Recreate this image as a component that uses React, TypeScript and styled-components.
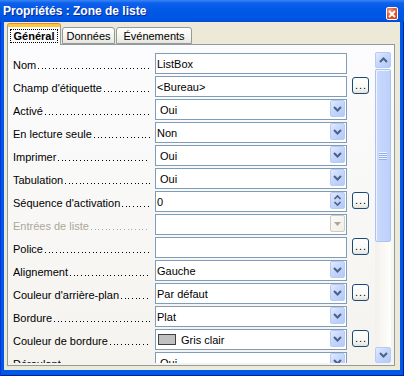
import React from 'react';
import styled, { createGlobalStyle } from 'styled-components';

const Global = createGlobalStyle`
  html, body { margin: 0; padding: 0; background: #ffffff; }
  body { font-family: "Liberation Sans", Arial, sans-serif; }
  * { box-sizing: border-box; }
`;

const Window = styled.div`
  width: 404px;
  height: 376px;
  display: flex;
  flex-direction: column;
  background: #0058e6;
  box-shadow: inset 1px 0 #0831d9, inset -1px 0 #001ea0, inset 0 -1px #001ea0;
`;

const TitleBar = styled.div`
  height: 22px;
  flex: none;
  display: flex;
  align-items: center;
  justify-content: space-between;
  padding: 0 6px 0 3px;
  background: linear-gradient(to bottom, #3a86f6 0px, #0d60ea 3px, #0058e6 11px, #0055e3 19px, #004cd9 22px);
`;

const Title = styled.span`
  color: #ffffff;
  font-family: "Liberation Sans", Arial, sans-serif;
  font-weight: bold;
  font-size: 12px;
  text-shadow: 1px 1px #0a2a9b;
`;

const CloseButton = styled.div`
  align-self: flex-end;
  margin-bottom: 2px;
  width: 12px;
  height: 13px;
  border: 1px solid #ffffff;
  border-radius: 2px;
  background: radial-gradient(circle at 30% 25%, #f39a7c 0%, #e45b35 45%, #cf3c12 100%);
  display: flex;
  align-items: center;
  justify-content: center;
`;

const Frame = styled.div`
  flex: 1;
  display: flex;
  padding: 0 4px 6px 4px;
`;

const Body = styled.div`
  flex: 1;
  display: flex;
  flex-direction: column;
  background: #ece9d8;
  padding: 2px 5px 4px 3px;
`;

const TabStrip = styled.div`
  height: 20px;
  display: flex;
  align-items: flex-end;
`;

const Tab = styled.div<{ $active?: boolean; $w: number }>`
  position: relative;
  width: ${p => p.$w}px;
  height: ${p => (p.$active ? 21 : 17)}px;
  margin-bottom: ${p => (p.$active ? -1 : 0)}px;
  margin-left: ${p => (p.$active ? 0 : 1)}px;
  z-index: ${p => (p.$active ? 2 : 1)};
  display: flex;
  align-items: center;
  justify-content: center;
  font-size: 11px;
  font-weight: ${p => (p.$active ? 'bold' : 'normal')};
  color: #000;
  border: 1px solid #919b9c;
  border-bottom: ${p => (p.$active ? 'none' : '1px solid #919b9c')};
  border-top: ${p => (p.$active ? '3px solid #ffc83c' : '1px solid #919b9c')};
  border-radius: 3px 3px 0 0;
  background: ${p =>
    p.$active ? '#fcfcfe' : 'linear-gradient(to bottom, #ffffff, #f4f3ee 60%, #e8e6dc)'};
  box-shadow: ${p => (p.$active ? '0 -1px #e68b2c' : 'none')};
  padding-top: ${p => (p.$active ? 0 : 1)}px;
  &:first-child { margin-left: 0; }
`;

const Focus = styled.span`
  outline: 1px dotted #000;
  outline-offset: 1px;
  padding: 0 2px;
  line-height: 10px;
`;

const Panel = styled.div`
  height: 322px;
  display: flex;
  border: 1px solid #919b9c;
  background: linear-gradient(to bottom, #fcfcfe, #f4f3ee);
  padding: 7px 3px 2px 0;
`;

const Rows = styled.div`
  width: 361px;
  margin-right: 6px;
  padding: 1px 0 0 5px;
  overflow: hidden;
  display: flex;
  flex-direction: column;
  gap: 2px;
`;

const Row = styled.div`
  flex: none;
  height: 21px;
  display: grid;
  grid-template-columns: 137px 192px 17px;
  column-gap: 5px;
  align-items: start;
`;

const Label = styled.div<{ $disabled?: boolean }>`
  height: 21px;
  display: flex;
  font-size: 11px;
  line-height: 21px;
  padding-top: 2px;
  white-space: nowrap;
  overflow: hidden;
  color: ${p => (p.$disabled ? '#aca899' : '#000')};
`;

const Leader = styled.span<{ $disabled?: boolean }>`
  flex: 1;
  margin-left: 2px;
  background-image: linear-gradient(
    to right,
    ${p => (p.$disabled ? '#aca899' : '#000')} 0 1px,
    transparent 1px 4px,
    ${p => (p.$disabled ? '#aca899' : '#000')} 4px 5px,
    transparent 5px 7px,
    ${p => (p.$disabled ? '#aca899' : '#000')} 7px 8px,
    transparent 8px
  );
  background-size: 11px 1px;
  background-repeat: repeat-x;
  background-position: 0 13px;
`;

const Field = styled.div<{ $pad: number }>`
  height: 21px;
  display: flex;
  align-items: center;
  border: 1px solid #7f9db9;
  background: #ffffff;
  padding-left: ${p => p.$pad}px;
  font-size: 11px;
  color: #000;
  white-space: nowrap;
`;

const Value = styled.span`
  flex: 1;
`;

const DropButton = styled.div<{ $disabled?: boolean }>`
  flex: none;
  align-self: flex-start;
  width: 15px;
  height: 17px;
  margin-right: 1px;
  border-radius: 2px;
  border: 1px solid ${p => (p.$disabled ? '#cfccc0' : '#b6cbf6')};
  background: ${p =>
    p.$disabled
      ? 'linear-gradient(135deg, #fbfbf8, #efeee8)'
      : 'linear-gradient(135deg, #e2eafe 0%, #c6d7fd 45%, #b3c9f8 100%)'};
  display: flex;
  align-items: center;
  justify-content: center;
`;

const Swatch = styled.span`
  flex: none;
  width: 18px;
  height: 11px;
  margin-left: 1px;
  margin-right: 5px;
  border: 1px solid #404040;
  background: #c0c0c0;
`;

const MoreButton = styled.div`
  margin-top: 1px;
  width: 17px;
  height: 17px;
  border: 1px solid #1c4a78;
  border-radius: 3px;
  background: linear-gradient(to bottom, #ffffff 0%, #f7f7f4 70%, #e3e1d8 100%);
  display: flex;
  align-items: flex-end;
  justify-content: center;
  font-size: 11px;
  line-height: 11px;
  letter-spacing: 1px;
  padding: 0 0 2px 1px;
  color: #000;
`;

const Scrollbar = styled.div`
  width: 16px;
  display: flex;
  flex-direction: column;
  background: linear-gradient(to right, #f3f1ec, #fefefb);
`;

const ScrollButton = styled.div`
  flex: none;
  width: 16px;
  height: 16px;
  border-radius: 2px;
  border: 1px solid #b6cbf6;
  background: linear-gradient(135deg, #e2eafe 0%, #c6d7fd 45%, #b3c9f8 100%);
  display: flex;
  align-items: center;
  justify-content: center;
`;

const Track = styled.div`
  flex: 1;
  display: flex;
  flex-direction: column;
`;

const Thumb = styled.div`
  margin-top: 1px;
  height: 173px;
  border: 1px solid #adc2f2;
  border-radius: 2px;
  background: linear-gradient(to right, #cbdafd, #bcd0fb);
  box-shadow: inset 1px 1px #eef3fe;
  display: flex;
  align-items: center;
  justify-content: center;
`;

const Grip = styled.div`
  width: 8px;
  height: 8px;
  background: repeating-linear-gradient(to bottom, #eef4fe 0 1px, #8eb0f3 1px 2px);
`;

type Kind = 'text' | 'combo' | 'spin' | 'disabled' | 'color';
interface RowData {
  label: string;
  value: string;
  kind: Kind;
  inset?: boolean;
  more?: boolean;
}

const rows: RowData[] = [
  { label: 'Nom', value: 'ListBox', kind: 'text' },
  { label: "Champ d'étiquette", value: '<Bureau>', kind: 'text', more: true },
  { label: 'Activé', value: 'Oui', kind: 'combo', inset: true },
  { label: 'En lecture seule', value: 'Non', kind: 'combo' },
  { label: 'Imprimer', value: 'Oui', kind: 'combo', inset: true },
  { label: 'Tabulation', value: 'Oui', kind: 'combo', inset: true },
  { label: "Séquence d'activation", value: '0', kind: 'spin', more: true },
  { label: 'Entrées de liste', value: '', kind: 'disabled' },
  { label: 'Police', value: '', kind: 'text', more: true },
  { label: 'Alignement', value: 'Gauche', kind: 'combo' },
  { label: "Couleur d'arrière-plan", value: 'Par défaut', kind: 'combo', more: true },
  { label: 'Bordure', value: 'Plat', kind: 'combo' },
  { label: 'Couleur de bordure', value: 'Gris clair', kind: 'color', more: true },
  { label: 'Déroulant', value: 'Oui', kind: 'combo', inset: true },
];

const ChevronDown = () => (
  <svg width="9" height="6" viewBox="0 0 9 6">
    <path d="M1 1 L4.5 4.5 L8 1" fill="none" stroke="#4d6185" strokeWidth="2" />
  </svg>
);

const ChevronUp = () => (
  <svg width="9" height="6" viewBox="0 0 9 6">
    <path d="M1 5 L4.5 1.5 L8 5" fill="none" stroke="#4d6185" strokeWidth="2" />
  </svg>
);

const SpinArrows = () => (
  <svg width="9" height="13" viewBox="0 0 9 13">
    <path d="M1.5 5 L4.5 2 L7.5 5" fill="none" stroke="#4d6185" strokeWidth="1.6" />
    <path d="M1.5 8 L4.5 11 L7.5 8" fill="none" stroke="#4d6185" strokeWidth="1.6" />
  </svg>
);

const GrayTriangle = () => (
  <svg width="7" height="4" viewBox="0 0 7 4">
    <path d="M0 0 H7 L3.5 4 Z" fill="#aca899" />
  </svg>
);

const CloseX = () => (
  <svg width="8" height="8" viewBox="0 0 8 8">
    <path d="M1 1 L7 7 M7 1 L1 7" stroke="#ffffff" strokeWidth="1.8" />
  </svg>
);

function Control({ row }: { row: RowData }) {
  const pad = row.inset ? 4 : 1;
  return (
    <Field $pad={pad}>
      {row.kind === 'color' && <Swatch />}
      <Value>{row.value}</Value>
      {row.kind === 'combo' || row.kind === 'color' ? (
        <DropButton>
          <ChevronDown />
        </DropButton>
      ) : null}
      {row.kind === 'spin' && (
        <DropButton>
          <SpinArrows />
        </DropButton>
      )}
      {row.kind === 'disabled' && (
        <DropButton $disabled>
          <GrayTriangle />
        </DropButton>
      )}
    </Field>
  );
}

export default function App() {
  return (
    <>
      <Global />
      <Window>
        <TitleBar>
          <Title>Propriétés : Zone de liste</Title>
          <CloseButton>
            <CloseX />
          </CloseButton>
        </TitleBar>
        <Frame>
          <Body>
            <TabStrip>
              <Tab $active $w={54}>
                <Focus>Général</Focus>
              </Tab>
              <Tab $w={53}>Données</Tab>
              <Tab $w={76}>Événements</Tab>
            </TabStrip>
            <Panel>
              <Rows>
                {rows.map(r => (
                  <Row key={r.label}>
                    <Label $disabled={r.kind === 'disabled'}>
                      <span>{r.label}</span>
                      <Leader $disabled={r.kind === 'disabled'} />
                    </Label>
                    <Control row={r} />
                    {r.more ? <MoreButton>...</MoreButton> : <span />}
                  </Row>
                ))}
              </Rows>
              <Scrollbar>
                <ScrollButton>
                  <ChevronUp />
                </ScrollButton>
                <Track>
                  <Thumb>
                    <Grip />
                  </Thumb>
                </Track>
                <ScrollButton>
                  <ChevronDown />
                </ScrollButton>
              </Scrollbar>
            </Panel>
          </Body>
        </Frame>
      </Window>
    </>
  );
}
